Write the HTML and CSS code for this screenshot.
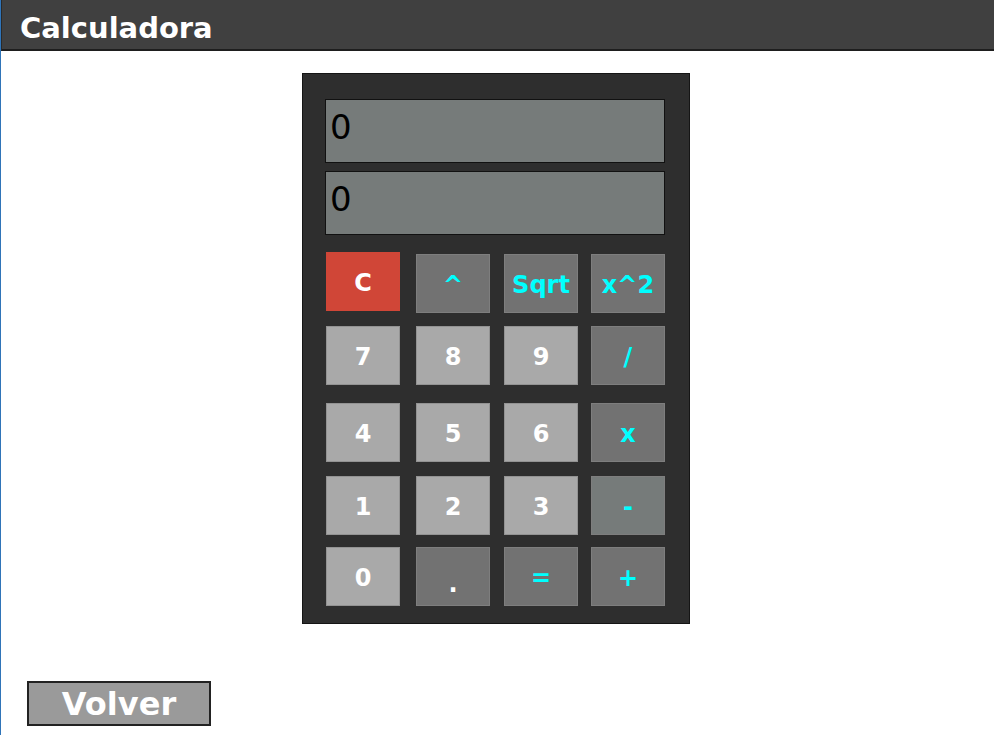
FILE: index.html
```html
<!DOCTYPE html>
<html lang="es">
<head>
<meta charset="utf-8">
<title>Calculadora</title>
<link rel="stylesheet" href="styles.css">
</head>
<body>
<div class="page">
  <header class="topbar"><h1 class="title">Calculadora</h1></header>
  <main class="content">
    <div class="calc">
      <div class="display">0</div>
      <div class="display">0</div>
      <div class="keys">
        <button class="key clear">C</button>
        <button class="key op">^</button>
        <button class="key op">Sqrt</button>
        <button class="key op">x^2</button>
        <button class="key num">7</button>
        <button class="key num">8</button>
        <button class="key num">9</button>
        <button class="key op">/</button>
        <button class="key num">4</button>
        <button class="key num">5</button>
        <button class="key num">6</button>
        <button class="key op">x</button>
        <button class="key num">1</button>
        <button class="key num">2</button>
        <button class="key num">3</button>
        <button class="key op minus">-</button>
        <button class="key num">0</button>
        <button class="key op dot">.</button>
        <button class="key op">=</button>
        <button class="key op">+</button>
      </div>
    </div>
    <button class="back">Volver</button>
  </main>
</div>
</body>
</html>
```
FILE: styles.css
```css
html, body {
  margin: 0;
  padding: 0;
  background: #ffffff;
}
body {
  font-family: "DejaVu Sans", Verdana, sans-serif;
}
.page {
  border-left: 1px solid #2f74b8;
  min-height: 735px;
  box-sizing: border-box;
}
.topbar {
  background: #404040;
  border-left: 1px solid #2a2a2a;
  border-bottom: 2px solid #1e1e1e;
  height: 49px;
  box-sizing: content-box;
  display: flex;
  align-items: center;
}
.title {
  margin: 8px 0 0 18px;
  color: #ffffff;
  font-size: 29px;
  font-weight: bold;
  line-height: 1;
}
.content {
  padding: 22px 0 0 0;
}
.calc {
  margin-left: 301px;
  background: #2e2e2e;
  border: 1px solid #151515;
  padding: 25px 0 0 22px;
  box-sizing: content-box;
  width: 364px;
  height: 524px;
}
.display {
  background: #767b7a;
  border: 1px solid #111111;
  color: #000000;
  font-size: 34px;
  line-height: 1;
  padding: 10px 0 0 4px;
  box-sizing: border-box;
  width: 340px;
  height: 64px;
  margin-bottom: 8px;
}
.keys {
  margin-top: 19px;
  display: grid;
  grid-template-columns: 90px 88px 87px 74px;
  grid-template-rows: 72px 77px 73px 71px 59px;
  margin-left: 1px;
}
.key {
  width: 74px;
  height: 59px;
  margin: 0;
  padding: 3px 0 0 0;
  border: 1px solid #858585;
  font-family: "DejaVu Sans", Verdana, sans-serif;
  font-weight: bold;
  font-size: 24px;
  line-height: 1;
  display: flex;
  align-items: center;
  justify-content: center;
}
.num {
  background: #a9a9a9;
  border-color: #939393;
  color: #ffffff;
}
.op {
  background: #727272;
  border-color: #7e7e7e;
  color: #00ffff;
}
.dot {
  color: #ffffff;
  padding-top: 14px;
}
.minus {
  background: #767b7a;
}
.clear {
  background: #d04637;
  border-color: #d04637;
  color: #ffffff;
  margin-top: -2px;
}
.back {
  margin: 57px 0 0 26px;
  width: 184px;
  height: 45px;
  background: #9a9a9a;
  border: 2px solid #222222;
  color: #ffffff;
  font-family: "DejaVu Sans", Verdana, sans-serif;
  font-weight: bold;
  font-size: 32px;
  line-height: 1;
  padding: 0;
  display: block;
}
```
